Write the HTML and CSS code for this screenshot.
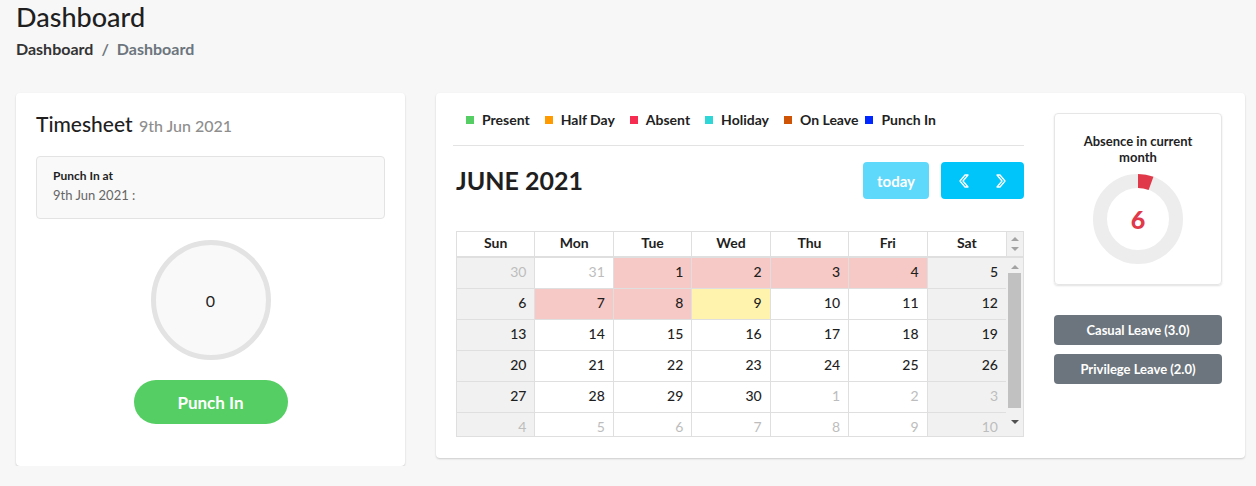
FILE: index.html
```html
<!DOCTYPE html>
<html>
<head>
<meta charset="utf-8">
<link rel="stylesheet" href="styles.css">
</head>
<body>
<div class="page-header">
  <h1 class="page-title">Dashboard</h1>
  <div class="breadcrumb"><span class="bc-link">Dashboard</span><span class="bc-sep">/</span><span class="bc-active">Dashboard</span></div>
</div>
<div class="content">
  <div class="card timesheet">
    <h3 class="ts-title">Timesheet <small>9th Jun 2021</small></h3>
    <div class="punch-det">
      <div class="pd-label">Punch In at</div>
      <div class="pd-value">9th Jun 2021 :</div>
    </div>
    <div class="punch-hours"><span>0</span></div>
    <button class="btn-punch">Punch In</button>
  </div>
  <div class="card cal-card">
    <div class="cal-main">
      <div class="legend">
        <span class="lg"><i class="sq present"></i>Present</span>
        <span class="lg"><i class="sq half"></i>Half Day</span>
        <span class="lg"><i class="sq absent"></i>Absent</span>
        <span class="lg"><i class="sq holiday"></i>Holiday</span>
        <span class="lg"><i class="sq leave"></i>On Leave</span>
        <span class="lg"><i class="sq punch"></i>Punch In</span>
      </div>
      <div class="toolbar">
        <h2 class="month">JUNE 2021</h2>
        <div class="tb-right">
          <button class="btn-today">today</button>
          <div class="btn-nav">
            <svg width="12" height="14" viewBox="0 0 12 14"><polygon points="7,1 10,1 5,7 10,13 7,13 2,7" fill="none" stroke="#fff" stroke-width="1.3" stroke-linejoin="round"/></svg>
            <svg width="12" height="14" viewBox="0 0 12 14"><polygon points="5,1 2,1 7,7 2,13 5,13 10,7" fill="none" stroke="#fff" stroke-width="1.3" stroke-linejoin="round"/></svg>
          </div>
        </div>
      </div>
      <div class="calendar">
        <div class="cal-head">
          <div class="hd-cells">
            <div class="hd">Sun</div><div class="hd">Mon</div><div class="hd">Tue</div><div class="hd">Wed</div><div class="hd">Thu</div><div class="hd">Fri</div><div class="hd">Sat</div>
          </div>
          <div class="hd-gutter"><i class="tri up"></i><i class="tri down"></i></div>
        </div>
        <div class="cal-body">
          <div class="grid">
            <div class="c we other">30</div><div class="c other">31</div><div class="c abs">1</div><div class="c abs">2</div><div class="c abs">3</div><div class="c abs">4</div><div class="c we">5</div>
            <div class="c we">6</div><div class="c abs">7</div><div class="c abs">8</div><div class="c today">9</div><div class="c">10</div><div class="c">11</div><div class="c we">12</div>
            <div class="c we">13</div><div class="c">14</div><div class="c">15</div><div class="c">16</div><div class="c">17</div><div class="c">18</div><div class="c we">19</div>
            <div class="c we">20</div><div class="c">21</div><div class="c">22</div><div class="c">23</div><div class="c">24</div><div class="c">25</div><div class="c we">26</div>
            <div class="c we">27</div><div class="c">28</div><div class="c">29</div><div class="c">30</div><div class="c other">1</div><div class="c other">2</div><div class="c we other">3</div>
            <div class="c we other">4</div><div class="c other">5</div><div class="c other">6</div><div class="c other">7</div><div class="c other">8</div><div class="c other">9</div><div class="c we other">10</div>
          </div>
          <div class="sbar">
            <i class="tri up"></i>
            <div class="thumb"></div>
            <i class="tri down dark"></i>
          </div>
        </div>
      </div>
    </div>
    <div class="side">
      <div class="absence">
        <div class="ab-title">Absence in current month</div>
        <div class="donut">
          <svg width="90" height="90" viewBox="0 0 90 90">
            <circle cx="45" cy="45" r="38" fill="none" stroke="#ededed" stroke-width="14"/>
            <circle cx="45" cy="45" r="38" fill="none" stroke="#e0394a" stroke-width="14" stroke-dasharray="13.3 300" transform="rotate(-90 45 45)"/>
          </svg>
          <span class="donut-num">6</span>
        </div>
      </div>
      <button class="btn-leave first">Casual Leave (3.0)</button>
      <button class="btn-leave">Privilege Leave (2.0)</button>
    </div>
  </div>
</div>
</body>
</html>
```
FILE: styles.css
```css
* { box-sizing: border-box; }
body {
  margin: 0;
  background: #f7f7f7;
  font-family: "Lato", "Liberation Sans", sans-serif;
  color: #1f1f1f;
}
.page-header { padding: 1px 16px 0; }
.page-title {
  margin: 0;
  font-size: 27px;
  font-weight: 500;
  line-height: 32px;
  color: #1f1f1f;
}
.breadcrumb {
  margin-top: 6px;
  font-size: 16px;
  font-weight: 700;
  line-height: 20px;
  display: flex;
}
.bc-link { color: #333; }
.bc-sep { color: #6c757d; padding: 0 8px; }
.bc-active { color: #6c757d; }
.content {
  display: flex;
  align-items: flex-start;
  gap: 31px;
  padding: 34px 11px 0 16px;
}
.card {
  background: #fff;
  border-radius: 4px;
  box-shadow: 0 1px 2px rgba(0,0,0,0.18);
}
.timesheet {
  width: 389px;
  padding: 19px 20px 42px;
  display: flex;
  flex-direction: column;
  align-items: center;
}
.ts-title {
  align-self: stretch;
  margin: 0 0 20px;
  font-size: 21px;
  font-weight: 500;
  line-height: 24px;
  height: 24px;
  color: #1f1f1f;
}
.ts-title small { font-size: 16px; color: #8e8e8e; font-weight: 500; line-height: 1; margin-left: 1px; }
.punch-det {
  align-self: stretch;
  background: #f9f9f9;
  border: 1px solid #e3e3e3;
  border-radius: 4px;
  padding: 10px 16px 13px;
}
.pd-label { font-size: 12px; font-weight: 700; line-height: 18px; color: #1f1f1f; }
.pd-value { font-size: 13px; line-height: 20px; color: #666; }
.punch-hours {
  margin-top: 21px;
  width: 120px;
  height: 120px;
  border-radius: 50%;
  border: 5px solid #e3e3e3;
  background: #f9f9f9;
  display: flex;
  align-items: center;
  justify-content: center;
  font-size: 16px;
  color: #1f1f1f;
}
.btn-punch {
  margin-top: 20px;
  width: 154px;
  height: 44px;
  border: none;
  border-radius: 22px;
  background: #55ce63;
  color: #fff;
  font-family: inherit;
  font-size: 17px;
  font-weight: 700;
}
.cal-card {
  width: 809px;
  padding: 20px 23px 21px 20px;
  display: flex;
  gap: 30px;
}
.cal-main { width: 568px; }
.legend {
  display: flex;
  padding: 0 0 18px 13px;
  border-bottom: 1px solid #e3e3e3;
  margin-left: -3px;
  font-size: 14px;
  font-weight: 700;
  line-height: 14px;
  color: #222;
}
.lg { display: flex; align-items: center; margin-right: 15px; }
.lg:nth-child(5) { margin-right: 7px; }
.sq { width: 8px; height: 8px; margin-right: 8px; display: inline-block; }
.present { background: #55ce63; }
.half { background: #ff9b00; }
.absent { background: #f62d51; }
.holiday { background: #2fd6d8; }
.leave { background: #d05406; }
.punch { background: #0027ff; }
.toolbar {
  margin-top: 16px;
  display: flex;
  justify-content: space-between;
  align-items: center;
  height: 37px;
}
.month { margin: 0; font-size: 25px; font-weight: 700; color: #1f1f1f; line-height: 30px; position: relative; top: -1px; }
.tb-right { display: flex; gap: 12px; }
.btn-today {
  width: 66px; height: 37px;
  border: none; border-radius: 4px;
  background: #5ed8fb;
  color: #fff;
  font-family: inherit; font-size: 15px; font-weight: 700;
}
.btn-nav {
  width: 83px; height: 37px;
  border-radius: 4px;
  background: #00c5fb;
  display: flex;
  justify-content: space-around;
  align-items: center;
  padding: 0 4px;
}
.calendar {
  margin-top: 32px;
  border: 1px solid #dfdfdf;
  font-size: 14px;
}
.cal-head {
  display: flex;
  border-bottom: 2px solid #dfdfdf;
}
.hd-cells { flex: 1; display: grid; grid-template-columns: repeat(7, 1fr); }
.hd {
  text-align: center;
  font-weight: 700;
  height: 24px;
  line-height: 22px;
  border-right: 1px solid #dfdfdf;
  color: #1f1f1f;
}
.hd:last-child { border-right: none; }
.hd-gutter {
  width: 17px;
  background: #f1f1f1;
  border-left: 1px solid #dfdfdf;
  display: flex;
  flex-direction: column;
  align-items: center;
  justify-content: center;
  gap: 6px;
}
.tri { display: block; width: 0; height: 0; border-left: 4px solid transparent; border-right: 4px solid transparent; }
.tri.up { border-bottom: 4px solid #a3a3a3; }
.tri.down { border-top: 4px solid #a3a3a3; }
.tri.dark { border-top-color: #505050; }
.cal-body { display: flex; height: 178px; overflow: hidden; }
.grid { flex: 1; display: grid; grid-template-columns: repeat(7, 1fr); grid-auto-rows: 31px; }
.c {
  border-right: 1px solid #dfdfdf;
  border-bottom: 1px solid #dfdfdf;
  text-align: right;
  padding: 6px 8px 0 0;
  line-height: 16px;
  color: #1f1f1f;
  font-weight: 500;
}
.c:nth-child(7n) { border-right: none; }
.c.we { background: #f1f1f1; }
.c.abs { background: #f7c9c6; }
.c.today { background: #fff3ad; }
.c.other { color: #bdbdbd; font-weight: 400; }
.sbar {
  width: 17px;
  background: #f1f1f1;
  display: flex;
  flex-direction: column;
  align-items: center;
  padding-top: 7px;
}
.thumb { width: 13px; height: 135px; background: #c1c1c1; margin: 4px 0 12px; }
.side { width: 168px; display: flex; flex-direction: column; }
.absence {
  border: 1px solid #e6e6e6;
  border-radius: 4px;
  box-shadow: 0 1px 2px rgba(0,0,0,0.12);
  padding: 19px 10px 20px;
  display: flex;
  flex-direction: column;
  align-items: center;
}
.ab-title { text-align: center; font-size: 13px; font-weight: 700; line-height: 16px; color: #1f1f1f; padding: 0 10px; }
.donut { position: relative; width: 90px; height: 90px; margin-top: 9px; }
.donut svg { display: block; }
.donut-num {
  position: absolute; inset: 0;
  display: flex; align-items: center; justify-content: center;
  font-size: 25px; font-weight: 900; color: #e0394a;
}
.btn-leave {
  height: 30px;
  border: none;
  border-radius: 4px;
  background: #6c757d;
  color: #fff;
  font-family: inherit;
  font-size: 13px;
  font-weight: 700;
  margin-top: 9px;
}
.btn-leave.first { margin-top: 30px; }
```
